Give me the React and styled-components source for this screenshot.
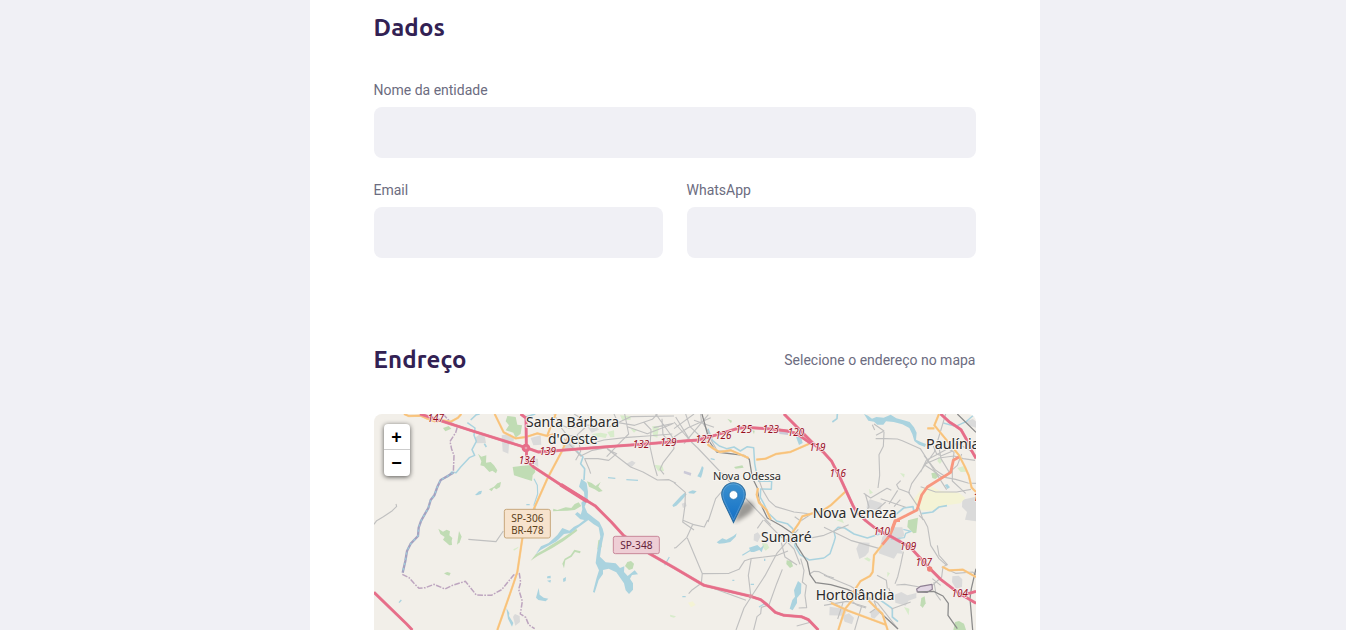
import React from "react";
import styled, { createGlobalStyle } from "styled-components";

const GlobalStyle = createGlobalStyle`
  * { box-sizing: border-box; }
  body { margin: 0; background: #f0f0f5; overflow: hidden; font-family: Roboto, "Liberation Sans", sans-serif; }
`;

const Page = styled.div`
  display: flex;
  height: 630px;
  overflow: hidden;
  padding-left: 309.5px;
`;

const Form = styled.form`
  flex: none;
  width: 730px;
  height: 900px;
  padding: 12px 64px 0;
  background: #fff;
`;

const Fieldset = styled.fieldset`
  margin: 0 0 ${(p) => p.$space || 0}px;
  padding: 0;
  border: 0;
  min-width: 0;
`;

const Legend = styled.div`
  display: flex;
  justify-content: space-between;
  align-items: center;
  height: 32px;
  margin-bottom: 38px;
`;

const Title = styled.h2`
  margin: 0;
  font: 700 24px/32px Ubuntu, "Noto Sans", sans-serif;
  letter-spacing: 0.16px;
  color: #322153;
`;

const Hint = styled.span`
  font-size: 14px;
  color: #6c6c80;
`;

const FieldGroup = styled.div`
  display: flex;
  gap: 24px;
`;

const Field = styled.div`
  flex: 1;
  display: flex;
  flex-direction: column;
  margin-bottom: 24px;
`;

const Label = styled.label`
  height: 16px;
  margin-bottom: 9px;
  font-size: 14px;
  line-height: 16px;
  color: #6c6c80;
`;

const Input = styled.input`
  width: 100%;
  height: 51px;
  padding: 16px 24px;
  border: 0;
  border-radius: 8px;
  background: #f0f0f5;
  font-size: 16px;
`;

const MapBox = styled.div`
  position: relative;
  height: 350px;
  overflow: hidden;
  border-radius: 8px;
  background: #f2efe9;
`;

const MapDrawing = styled.svg`
  display: block;
  width: 602px;
  height: 350px;
`;

const ZoomControl = styled.div`
  position: absolute;
  top: 10px;
  left: 10px;
  width: 26px;
  overflow: visible;
  border-radius: 4px;
  background: #fff;
  box-shadow: 0 1px 5px rgba(0, 0, 0, 0.65);
`;

const ZoomButton = styled.div`
  height: 26px;
  font: bold 18px/26px "Liberation Sans", sans-serif;
  text-align: center;
  color: #000;
  &:first-child { border-bottom: 1px solid #ccc; }
`;

const Pin = styled.svg`
  position: absolute;
  left: 347px;
  top: 68px;
  width: 42px;
  height: 43px;
`;

/* Map coordinates use three units per CSS pixel. */
const greens = [
  "M400 12L425 15 430 38 444 40 440 65 425 77 418 62 395 55 405 40 395 28Z",
  "M416 165L440 162 480 158 484 180 476 190 474 207 452 200 438 196 420 190Z",
  "M312 125L322 134 337 130 336 152 350 150 360 160 370 175 366 184 355 176 346 180 330 163 319 160 322 148Z",
  "M345 232L360 224 370 214 381 210 378 225 367 232 360 227 353 238Z",
  "M207 48L224 42 232 50 214 58Z",
  "M193 350L207 359 218 353 228 358 226 370 235 378 233 387 234 399 226 400 216 391 207 383 212 375 199 366Z",
  "M255 357L263 374 257 391 249 398 252 377Z",
  "M210 484L220 480 230 483 226 491 217 488Z",
  "M538 290L550 294 575 286 592 288 602 276 614 271 622 282 602 294 580 296 552 297 537 298Z",
  "M639 208L653 213 665 222 680 210 673 224 686 237 675 240 662 232 645 224Z",
  "M470 446L485 427 510 413 530 400 566 378 607 350 610 356 570 386 534 409 491 432Z",
  "M753 462L760 450 771 447 780 455 776 470 765 474Z",
  "M673 385L682 382 683 404 674 418 670 410Z",
  "M565 455L572 440 590 430 601 413 620 418 618 424 603 420 593 434 574 445 570 469Z",
  "M1238 445L1252 447 1257 463 1248 468 1237 456Z",
  "M1672 184L1688 180 1695 193 1684 201 1675 198Z",
  "M1642 558L1652 553 1655 574 1646 588 1639 580Z",
  "M1743 630L1755 627 1770 635 1776 654 1738 654Z",
  "M1602 325L1632 317 1627 362 1618 364 1600 345Z",
  "M1080 165L1105 160 1109 167 1085 170Z M1135 55L1142 56 1140 67Z M1060 20L1074 26 1071 34Z",
];
const paleGreens = [
  "M655 66L680 62 700 66 695 78 675 74 660 84Z M700 60L720 55 721 75 709 76Z M835 42L855 43 850 77 837 73Z M770 50L790 53 780 62Z M840 158L865 161 870 177 853 178Z M738 10L770 12 770 23 745 25Z",
  "M1164 393L1180 395 1186 407 1175 416 1167 407Z M1388 325L1404 320 1410 334Z M1470 440L1480 436 1490 442 1486 449Z M1540 480L1548 484 1540 496Z M888 608L906 613 900 617 889 614Z M1590 585L1606 590 1604 610Z",
  "M1695 135L1705 146 1698 156 1690 147Z M1750 168L1770 162 1780 179 1760 180Z M1578 183L1592 186 1590 197Z M1485 230L1497 242 1487 247Z M418 412L434 404 432 408 420 416Z",
];
const yellows = [
  "M1643 230L1670 222 1697 236 1755 242 1774 258 1759 274 1718 280 1671 296 1630 295 1618 264Z",
  "M942 572L956 568 965 579 951 586Z",
];
const greys = [
  "M383 70L410 66 420 77 418 93 405 98 403 125 386 118Z",
  "M302 78L320 65 332 72 336 93 307 94Z",
  "M757 155L774 146 785 152 773 165Z M570 85L600 83 602 110 574 118 565 99Z M475 137L492 141 493 165 472 151Z",
  "M470 78L500 70 502 98 478 100Z",
  "M1140 367L1151 361 1160 372 1151 391 1139 385Z M923 275L935 271 938 282 927 288Z",
  "M1447 410L1456 391 1487 392 1484 420 1474 432 1456 441Z",
  "M1517 410L1525 375 1555 346 1585 346 1592 372 1578 377 1586 402 1584 425 1570 424 1560 440 1514 424Z",
  "M1367 584L1420 592 1412 611 1366 610Z M1404 612L1425 604 1440 617 1434 637 1412 629Z",
  "M1562 548L1582 540 1600 550 1627 543 1627 558 1604 566 1595 581 1564 572Z",
  "M1735 493L1754 491 1765 502 1764 525 1746 530 1734 510Z",
  "M1765 263L1806 254 1806 328 1773 323 1779 300 1764 285Z",
  "M1778 28L1796 21 1806 28 1806 47 1782 40Z",
  "M1480 270L1488 262 1524 274 1519 297 1478 288Z",
  "M417 614L423 606 437 612 438 630 424 641Z",
  "M1490 601L1515 587 1520 600 1501 620 1491 616Z",
  "M640 44L665 40 675 53 653 62Z",
];
const waterAreas = [
  "M1470 6L1482 11 1494 20 1507 15 1529 17 1550 8 1567 19 1589 25 1607 30 1620 46 1628 62 1626 83 1642 91 1656 96 1653 105 1635 98 1621 87 1615 67 1606 48 1585 37 1559 30 1536 28 1528 38 1510 38 1500 29 1483 26Z",
  "M485 427L501 403 524 393 550 369 565 348 586 356 600 344 615 337 631 324 619 322 603 307 610 300 626 312 640 304 655 316 640 326 607 350 590 363 570 366 548 388 500 414Z",
  "M618 316L625 292 622 272 632 262 630 240 615 224 622 200 638 213 642 239 641 261 632 284 640 302 660 318 676 330 686 350 690 366 682 404 678 434 695 451 725 454 738 468 751 463 750 480 761 492 782 475 792 487 774 489 768 500 777 514 777 533 765 546 755 535 750 514 739 498 727 481 704 470 687 474 687 486 674 504 662 542 657 540 667 500 675 475 665 453 668 428 671 410 679 374 674 346 658 336 640 322Z",
  "M1028 391L1045 379 1057 383 1078 372 1088 364 1085 374 1069 390 1051 394 1035 395Z",
  "M1272 507L1282 515 1281 544 1269 558 1269 573 1256 595 1247 590 1255 564 1263 554 1260 535Z",
  "M486 557L494 528 497 548 509 557 523 560 515 568 493 564Z",
  "M303 249L315 238 324 236 321 246 309 250Z",
  "M977 180L984 162 989 167 985 185 981 197 970 193Z",
  "M895 280L920 253 932 242 938 247 924 264 907 281 898 285Z M943 240L956 235 968 238 960 245 945 244Z",
  "M520 493L530 491 530 499 519 499Z M567 500L576 495 575 507 568 510Z M519 506L531 504 529 512Z M397 588L406 603 405 612 418 633 414 644 402 620Z",
  "M1125 407L1150 399 1160 408 1170 399 1163 421 1156 414 1140 420 1130 420Z",
  "M1712 219L1720 216 1728 226 1720 231Z",
  "M1265 72L1282 78 1286 93 1275 99Z",
];
const streams = [
  ["M290 24L307 8 317 6M280 32L303 48 300 70 307 88 294 113 302 130 286 137 260 165 246 182 233 180 222 194 200 204", 4.5],
  ["M331 95L337 105M455 15L484 6M608 117L627 135 620 155 632 170 630 204", 5],
  ["M1002 50L1015 85 1036 102 1058 110 1080 105 1099 117 1120 104 1139 107 1142 154 1147 181 1154 208 1193 207 1192 232 1160 231 1159 256 1169 274 1182 302 1208 327 1240 335 1256 350 1268 378 1262 400 1278 428 1306 444 1350 438", 4.5],
  ["M1350 438L1368 425 1380 390 1384 376 1380 358 1392 346 1412 348 1440 366 1480 378 1517 366", 4.5],
  ["M1375 30L1389 20 1390 6M1550 320L1589 288 1617 284 1620 300M1642 305L1676 300 1695 285 1719 281", 5],
  ["M1708 33L1745 43 1776 29 1800 8M1550 382L1591 377 1595 364 1611 358 1588 352", 4],
  ["M480 200L490 220 491 246 480 279 486 298M1105 430L1136 411M1155 585L1174 574M872 460L886 435", 3.5],
  ["M1520 565L1540 579 1555 590 1555 615 1572 629", 5],
  ["M1075 505h6M1130 517h10M925 554h10M1172 440v7M75 572l7 -8M702 197l22 2M757 203l35 2M1010 140l12 3M457 278h10", 4],
];
const minorRoads = [
  "M0 337L8 326 28 314 55 296 68 283 66 276M283 382L366 389 388 357",
  "M540 6L560 45 580 71 620 74 650 95 690 84 760 76 820 72 895 66M550 35L585 48 638 39 706 44 770 14 900 12M600 6L630 24 632 48 610 68 620 118 605 145",
  "M570 80L620 132 655 115 697 107 712 118 728 125 704 145 672 140 632 140 645 170 650 185M700 111L770 165 807 180 850 204 885 203 906 214",
  "M720 6L732 32 782 40 835 22 850 6M752 6L764 66 741 89 698 134M760 44L820 65 893 37M809 30L831 53 828 104 840 158 850 192",
  "M864 20L867 68 890 94M845 6L895 75 900 110 868 151 858 172 870 187M839 47L899 34",
  "M900 30L952 90 971 108 1190 338M905 15L948 85M935 6L948 44 983 77 1003 95M900 75L942 47 1010 17M900 50L960 6M930 95L980 35 1003 8",
  "M980 6L982 27 1002 57 1010 82 1030 117 1070 114 1126 142M960 25L1020 46M1002 330L1025 260 1042 240 1068 232",
  "M900 212L934 241 933 280 926 330 960 354M925 324L956 337 991 345 1001 324M957 335L938 377 906 407 900 408",
  "M940 378L961 428 985 485 1065 484 1095 472 1112 446 1130 440 1210 430 1242 417M985 483L982 514 955 533 944 545M1132 438L1123 490 1130 548M1005 524L1116 565",
  "M1086 654L1110 588 1137 546 1173 491 1208 425 1245 382 1273 352M1150 349L1168 324M1171 324L1220 374 1250 390 1350 370 1424 338",
  "M1225 472L1208 515 1185 579 1162 586 1160 605 1149 614 1139 654M1280 440L1290 475 1285 510 1297 520 1293 550 1298 587 1274 588",
  "M1222 392L1233 435 1269 459M1235 385L1260 411 1278 457M1268 642L1312 630 1316 640M1305 487L1320 478 1335 479 1360 492 1380 498",
  "M1147 181L1165 232 1185 266 1205 284 1260 300 1312 306M1262 314L1280 327 1315 304M1505 80L1535 80 1570 81 1585 86 1639 110 1680 174 1718 233",
  "M1506 70L1530 57 1500 36M1495 38L1502 54M1530 60L1528 103 1515 128 1517 190 1512 228M1469 244L1490 258 1539 229 1552 235M1474 246L1485 285 1475 299",
  "M1520 260L1595 286M1580 206L1568 218 1574 230 1608 243M1571 235L1545 276M1579 263L1560 284M1535 270L1508 294",
  "M1715 6L1681 120 1613 215 1604 242 1636 290 1647 324M1640 180L1657 145 1718 112 1753 91M1653 160L1675 174 1701 194 1745 202 1782 213 1806 214",
  "M1678 102L1688 126 1702 131 1731 119 1748 93 1785 113 1806 132M1694 100L1701 140 1726 181 1750 160 1763 126M1711 102L1740 121 1735 162 1735 207 1775 244",
  "M1640 224L1685 240 1748 240 1791 232M1650 130L1685 175 1715 194 1736 169M1655 155L1695 138 1740 132 1768 140 1803 145",
  "M1350 346L1430 385 1517 410M1350 490L1430 523 1510 572 1572 651M1588 419L1580 458 1571 495 1563 515M1567 519L1592 517 1637 525 1660 533",
  "M1635 310L1650 324 1661 345 1670 400 1695 440 1718 460M1690 400L1695 430 1720 458 1707 464 1703 495 1675 520M1703 465L1745 484 1796 480 1806 489M1675 500L1700 520",
  "M1498 565L1442 543 1415 555M1476 588L1450 580 1436 569M1544 528L1554 555 1542 565M1552 591L1610 570M1350 559L1428 598M1463 582L1442 654",
  "M1350 580L1419 568 1477 585M1408 569L1391 621M1499 563L1508 588 1487 602M1509 490L1537 505 1540 530M1680 510L1686 546 1700 565",
];
const railways = [
  "M984 6L1007 90 1028 120 1110 130 1126 142 1135 197 1150 228 1155 265 1180 318 1223 342 1255 364 1268 400 1300 450 1308 488 1325 512 1370 518 1420 532 1480 559 1517 600 1572 651",
  "M1750 6L1806 61M1806 470L1792 530 1788 560 1796 654",
  "M1631 540L1679 538 1707 552 1723 574 1722 610 1750 650",
];
const oranges = [
  "M90 6L104 12 140 11 160 20 185 29 205 25 230 29 252 17 262 6",
  "M362 6L389 61 425 79 456 75 490 64 520 72 540 66",
  "M545 6L520 70M585 68L565 115 520 200 480 290 445 379 430 480 415 525 370 654",
  "M1000 86L1003 99 1020 111 1037 120 1070 115 1124 138M1147 143L1175 140 1206 126 1249 120 1306 95",
  "M1152 228L1148 248 1155 272 1177 293 1190 322M1255 362L1275 333 1285 313 1315 304 1340 300 1370 280 1415 238",
  "M1695 6L1681 40 1702 65 1755 130 1772 163 1784 190 1793 227 1806 240M1660 49L1681 49",
  "M1525 398L1500 430 1496 480 1488 492 1459 508 1438 540 1435 564 1413 591 1393 654",
  "M1371 573L1422 596 1535 638M1482 564L1508 590 1525 605 1541 654M1705 464L1725 475 1767 473 1806 495",
];
const motorways = [
  "M138 6L290 55 456 107 493 120 545 116 700 104 800 97 900 89 972 84 1030 68 1085 51 1112 46 1192 51 1240 57 1267 64 1314 97",
  "M440 6L456 18 457 107 458 145 480 166 560 218 663 281 712 330 748 370 825 424 900 467 990 520 1130 553 1160 563 1180 579 1204 601 1230 610 1282 614 1303 623 1333 654",
  "M0 541L98 636 115 654",
  "M1230 6L1318 95 1350 122 1373 148 1400 201 1418 240 1437 281 1447 299 1475 326 1508 352 1550 373 1610 407 1667 469 1700 502 1748 539 1806 574",
  "M1700 6L1725 29 1745 42 1761 53 1778 83 1790 111 1806 139",
  "M1753 553L1806 538",
];
const boundaries = [
  "M207 6L230 31 250 45 245 62 228 88 233 112 240 130 238 182",
  "M85 487L105 497 120 514 135 529 154 527 180 517 213 531 235 520 274 508 307 549 352 550 383 533 419 489 436 485 440 511 434 532 445 568 439 606 455 616 464 638 482 650",
];
const county = "M238 182L200 204 190 225 181 250 170 264 163 288 152 307 141 327 134 347 132 372 110 395 99 417 94 447 86 482";

const places = [
  [456, 44, 42, 279, "Santa Bárbara"],
  [522, 97, 42, 149, "d'Oeste"],
  [1017, 205, 32, 204, "Nova Odessa"],
  [1656, 111, 42, 161, "Paulínia"],
  [1316, 319, 42, 252, "Nova Veneza"],
  [1161, 391, 42, 152, "Sumaré"],
  [1325, 564, 42, 236, "Hortolândia"],
];
const markers = [
  [185, 31, 147], [459, 157, 134], [521, 128, 139], [801, 108, 132], [883, 102, 129],
  [989, 92, 127], [1048, 80, 126], [1109, 62, 125], [1190, 64, 123], [1266, 72, 120],
  [1330, 116, 119], [1391, 194, 116], [1523, 370, 110], [1602, 413, 109],
  [1649, 461, 107], [1757, 555, 104], [1822, 268, 105],
];

const Areas = ({ items, color }) => items.map((d) => <path key={d} d={d} fill={color} />);
const Roads = ({ items, color, width, casing }) => (
  <g fill="none" strokeLinejoin="round">
    {casing && items.map((d) => <path key={"c" + d} d={d} stroke={casing} strokeWidth={width + 2} />)}
    {items.map((d) => <path key={d} d={d} stroke={color} strokeWidth={width} />)}
  </g>
);

const RoadShield = ({ x, y, w, h, fill, stroke, color, lines }) => (
  <g fontFamily='"Noto Sans", sans-serif' fontSize="31" fill={color}>
    <rect x={x} y={y} width={w} height={h} rx="6" fill={fill} stroke={stroke} strokeWidth="3" />
    {lines.map((line, i) => (
      <text key={line} x={x + w / 2} y={y + 39 + i * 36} textAnchor="middle" textLength="97" lengthAdjust="spacingAndGlyphs">{line}</text>
    ))}
  </g>
);

function StreetMap() {
  return (
    <MapDrawing viewBox="0 6 1806 1050">
      <Areas items={greys} color="#dadada" />
      <Areas items={yellows} color="#f4f3d5" />
      <Areas items={paleGreens} color="#d8eccb" />
      <Areas items={greens} color="#c0dcb4" />
      <path d="M930 176L952 183 950 191 929 184ZM1216 57L1242 61 1242 69 1216 66Z" fill="#cbc9d7" />
      <g fill="none" stroke="#aad3df" strokeLinejoin="round">
        {streams.map(([d, width]) => <path key={d} d={d} strokeWidth={width} />)}
      </g>
      <Areas items={waterAreas} color="#aad3df" />
      <path d={county} fill="none" stroke="#a5a1c0" strokeWidth="7" />
      <path d={county} fill="none" stroke="#9bcbd9" strokeWidth="4" strokeDasharray="7 9" />
      <g fill="none" stroke="#bda5bf" strokeWidth="4.5" strokeDasharray="17 4 5 4">
        {boundaries.map((d) => <path key={d} d={d} />)}
      </g>
      <Roads items={minorRoads} color="#c0c0c0" width={3.4} />
      <path d="M1628 531L1640 523 1674 517 1675 532 1660 541 1630 540Z" fill="#e2d6e4" stroke="#8e7f93" strokeWidth="3.5" strokeLinejoin="round" />
      <Roads items={railways} color="#8b8b8b" width={3.8} />
      <Roads items={oranges} color="#f8c27b" width={5} casing="#f9d6a3" />
      <Roads items={["M1755 135L1738 145 1730 181 1660 225 1643 249 1629 294 1598 310 1565 326 1548 370 1525 398", "M1553 354L1563 326 1578 326"]} color="#f8977f" width={8.5} />
      <Roads items={motorways} color="#e66e89" width={7} casing="#e98a9f" />
      <path d="M560 218L640 268" stroke="#e66e89" strokeWidth="12" fill="none" />
      <circle cx="456" cy="108" r="13" fill="#e66e89" />
      <circle cx="456" cy="108" r="4" fill="#e9a0b0" />
      <circle cx="1667" cy="471" r="8" fill="#f08079" />
      <circle cx="1130" cy="553" r="6" fill="#dc8f9d" />
      <RoadShield x={391} y={292} w={138} h={86} fill="#f7e3cd" stroke="#c7a77b" color="#5c421c" lines={["SP-306", "BR-478"]} />
      <RoadShield x={718} y={373} w={138} h={52} fill="#eeced5" stroke="#c8889a" color="#65213a" lines={["SP-348"]} />
      <g fontFamily='"Noto Sans", sans-serif' fontStyle="italic" fontSize="31" fill="#960e1c" stroke="#f8eef0" strokeWidth="4" paintOrder="stroke">
        {markers.map(([x, y, n]) => (
          <text key={n} x={x} y={y} textAnchor="middle" textLength="49" lengthAdjust="spacingAndGlyphs">{n}</text>
        ))}
      </g>
      <g fontFamily='"Noto Sans", sans-serif' fill="#2b2b2b" stroke="#f7f5f1" strokeWidth="6" strokeLinejoin="round" paintOrder="stroke">
        {places.map(([x, y, size, length, name]) => (
          <text key={name} x={x} y={y} fontSize={size} textLength={length} lengthAdjust="spacingAndGlyphs">{name}</text>
        ))}
      </g>
    </MapDrawing>
  );
}

function MapPin() {
  return (
    <Pin viewBox="0 0 42 43">
      <defs>
        <linearGradient id="pinFill" x1="0" y1="0" x2="0" y2="1">
          <stop offset="0" stopColor="#3c91cf" />
          <stop offset="1" stopColor="#126fc6" />
        </linearGradient>
        <filter id="pinShadow" x="-30%" y="-30%" width="160%" height="160%">
          <feGaussianBlur stdDeviation="2" />
        </filter>
      </defs>
      <path d="M13 41L18 25C22 17 32 18 33 24C34 30 24 35 13 41Z" fill="#000" opacity=".36" filter="url(#pinShadow)" />
      <path d="M12.5 .7C6 .7 .7 6 .7 12.4C.7 15.2 1.7 18 3 20.7L12.5 40.5L22 20.7C23.3 18 24.3 15.2 24.3 12.4C24.3 6 19 .7 12.5 .7Z" fill="url(#pinFill)" stroke="#2d6ea0" strokeWidth="1.1" />
      <path d="M12.5 1.9C6.6 1.9 1.9 6.7 1.9 12.4C1.9 15 2.8 17.5 4.1 20.2L12.5 37.7L20.9 20.2C22.2 17.5 23.1 15 23.1 12.4C23.1 6.7 18.4 1.9 12.5 1.9Z" fill="none" stroke="#fff" strokeOpacity=".18" />
      <circle cx="12.5" cy="13" r="4.4" fill="#fff" stroke="#2d75ad" strokeWidth=".8" />
    </Pin>
  );
}

export default function App() {
  return (
    <Page>
      <GlobalStyle />
      <Form>
        <Fieldset $space={62}>
          <Legend><Title>Dados</Title></Legend>
          <Field>
            <Label htmlFor="name">Nome da entidade</Label>
            <Input id="name" />
          </Field>
          <FieldGroup>
            <Field>
              <Label htmlFor="email">Email</Label>
              <Input id="email" />
            </Field>
            <Field>
              <Label htmlFor="whatsapp">WhatsApp</Label>
              <Input id="whatsapp" />
            </Field>
          </FieldGroup>
        </Fieldset>
        <Fieldset>
          <Legend>
            <Title>Endreço</Title>
            <Hint>Selecione o endereço no mapa</Hint>
          </Legend>
          <MapBox>
            <StreetMap />
            <MapPin />
            <ZoomControl>
              <ZoomButton>+</ZoomButton>
              <ZoomButton>−</ZoomButton>
            </ZoomControl>
          </MapBox>
        </Fieldset>
      </Form>
    </Page>
  );
}
